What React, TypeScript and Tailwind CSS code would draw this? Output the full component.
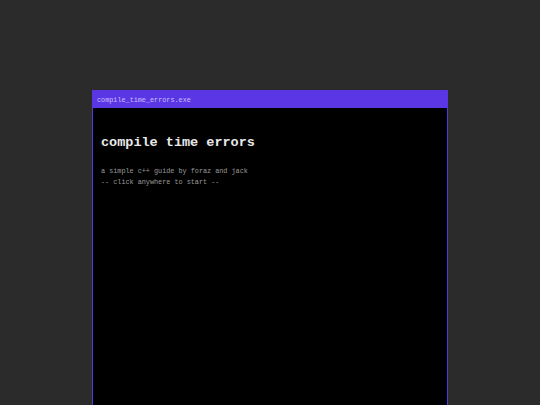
export default function App() {
  return (
    <div className="h-[405px] w-full overflow-hidden bg-[#2b2b2b] pt-[90px]">
      <div className="mx-auto flex h-[340px] w-[356px] flex-col border border-[#5a36e0] bg-black font-['Liberation_Mono',monospace]">
        <div className="flex h-[17px] items-center bg-[#5b36e4] pl-[4px] pt-[1px] text-[6.8px] text-[#c9bfff]">
          compile_time_errors.exe
        </div>
        <div className="px-[8px] pt-[27px]">
          <h1 className="text-[13.5px] font-bold leading-[16px] text-[#e8e8e8]">compile time errors</h1>
          <div className="mt-[15px] text-[6.8px] leading-[11px] text-[#9a9a9a]">
            <p>a simple c++ guide by foraz and jack</p>
            <p>-- click anywhere to start --</p>
          </div>
        </div>
      </div>
    </div>
  );
}
